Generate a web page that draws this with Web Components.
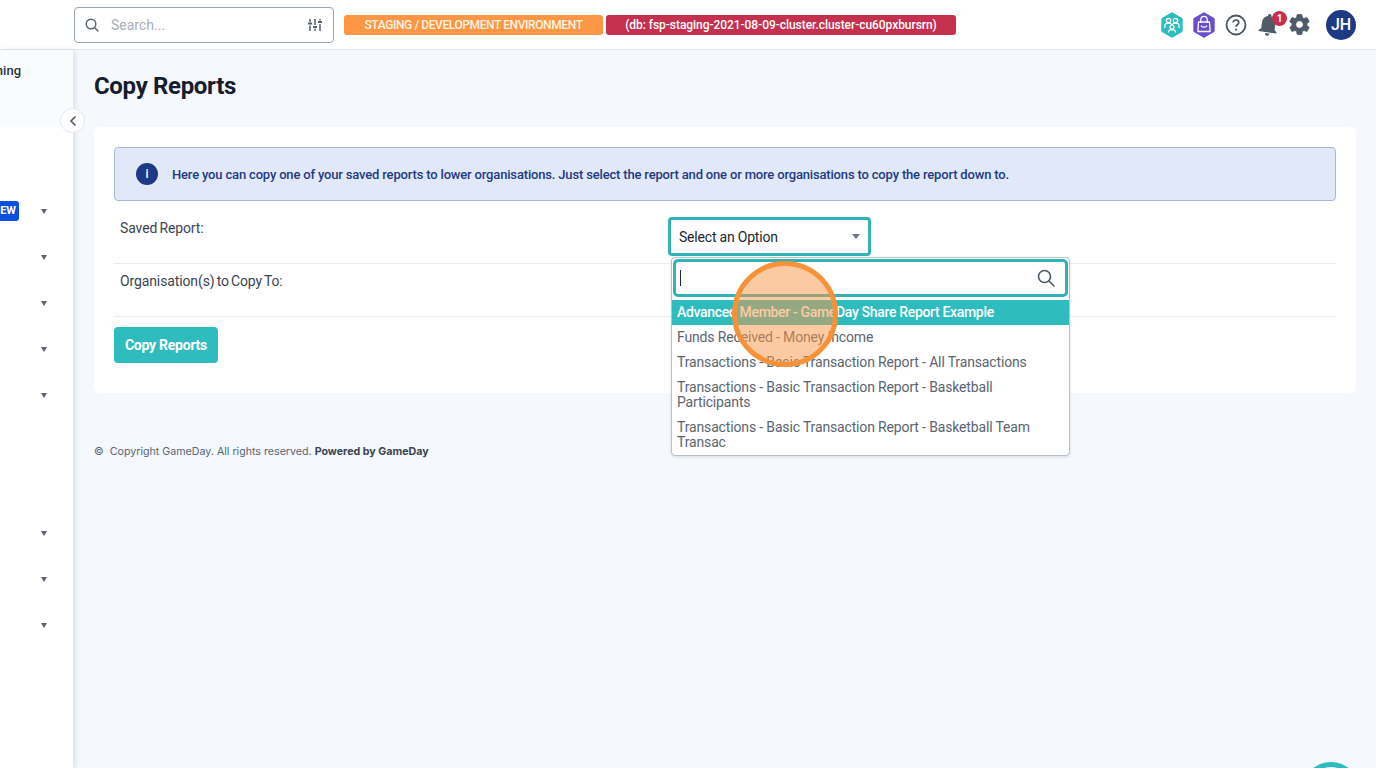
<!DOCTYPE html>
<html lang="en">
<head>
<meta charset="utf-8">
<title>Copy Reports</title>
<style>
html, body { margin: 0; height: 100%; overflow: hidden; }
body {
    display: flex;
    flex-direction: column;
    font-family: Roboto, "Liberation Sans", sans-serif;
    background: #f5f8fc;
}
</style>
</head>
<body>
<app-header></app-header>
<app-shell>
    <side-bar slot="side"></side-bar>
    <h-title>Copy Reports</h-title>
    <copy-card></copy-card>
    <page-footer></page-footer>
</app-shell>
<script>
class AppHeader extends HTMLElement {
    connectedCallback() {
        const shadow = this.attachShadow({ mode: "open" });
        shadow.innerHTML = `
          <style>
          :host {
              display: flex;
              align-items: center;
              height: 49px;
              flex: none;
              background: #fff;
              border-bottom: 1px solid #e4eaee;
              padding-left: 74px;
              box-sizing: content-box;
          }
          .search {
              width: 260px;
              height: 36px;
              box-sizing: border-box;
              border: 1px solid #9aa7b1;
              border-radius: 4px;
              display: flex;
              align-items: center;
              padding: 0 10px;
              color: #a7b0b8;
              font-size: 14px;
          }
          .search span { flex: 1; margin-left: 12px; }
          .badges { display: flex; gap: 3px; margin-left: 10px; }
          .badge {
              height: 20px;
              line-height: 20px;
              border-radius: 3px;
              color: #fff;
              font-size: 12px;
              font-weight: 500;
              text-align: center;
          }
          .orange { width: 259px; background: #fb9644; color: #fff3e2; letter-spacing: -0.4px; }
          .red { width: 350px; background: #c5304f; letter-spacing: -0.05px; }
          .icons { display: flex; align-items: center; margin-left: auto; padding-right: 20px; }
          svg { display: block; }
          .bell { position: relative; margin-left: 8px; }
          .bell svg { transform: rotate(8deg); }
          .bell b {
              position: absolute;
              left: 17px;
              top: 0;
              width: 15px;
              height: 15px;
              border-radius: 50%;
              background: #c5304f;
              color: #fff;
              font-size: 10px;
              line-height: 15px;
              text-align: center;
              font-weight: 700;
          }
          .avatar {
              width: 30px;
              height: 30px;
              border-radius: 50%;
              background: #1e3a86;
              color: #fff;
              font-size: 16px;
              font-weight: 500;
              line-height: 30px;
              text-align: center;
              margin-left: 14px;
          }
          </style>
          <div class="search">
            <svg width="14" height="14" viewBox="0 0 14 14" fill="none" stroke="#55626e" stroke-width="1.4">
              <circle cx="6" cy="6" r="4.8"/><path d="M9.6 9.6 13 13" stroke-linecap="round"/>
            </svg>
            <span>Search...</span>
            <svg width="16" height="16" viewBox="0 0 16 16" fill="none" stroke="#55626e" stroke-width="1.5">
              <path d="M3 2v3M3 8.5V14M8 2v6M8 11.5V14M13 2v1.5M13 7v7"/>
              <path d="M1 6.5h4M6 10h4M11 5h4" stroke-width="1.8"/>
            </svg>
          </div>
          <div class="badges">
            <div class="badge orange">STAGING / DEVELOPMENT ENVIRONMENT</div>
            <div class="badge red">(db: fsp-staging-2021-08-09-cluster.cluster-cu60pxbursrn)</div>
          </div>
          <div class="icons">
            <svg width="22" height="26" viewBox="0 0 22 26">
              <path d="M11 1.500 20.500 7v12L11 24.500 1.500 19V7z" fill="#2ebcbf" stroke="#2ebcbf" stroke-width="2.400" stroke-linejoin="round"/>
              <g fill="none" stroke="#fff" stroke-width="1.200">
                <circle cx="7.500" cy="8.500" r="2.200"/><circle cx="14.500" cy="8.500" r="2.200"/>
                <path d="M3.800 16v-2c0-1.700 1.500-2.800 3.700-2.800 1.400 0 2.800.6 3.500 1.500.7-.9 2.100-1.500 3.500-1.500 2.200 0 3.700 1.100 3.700 2.800v2"/>
                <circle cx="11" cy="15" r="2"/>
                <path d="M7.500 20.500c0-1.700 1.500-2.800 3.500-2.800s3.500 1.100 3.500 2.800"/>
              </g>
            </svg>
            <svg style="margin-left:10px" width="22" height="26" viewBox="0 0 22 26">
              <path d="M11 1.500 20.500 7v12L11 24.500 1.500 19V7z" fill="#6a4fc9" stroke="#6a4fc9" stroke-width="2.400" stroke-linejoin="round"/>
              <g fill="none" stroke="#fff" stroke-width="1.300" stroke-linecap="round" stroke-linejoin="round">
                <path d="M5.500 10h11l.6 9.500H4.900z"/>
                <path d="M7.800 10V7.500C7.800 5.600 9.200 4.300 11 4.300s3.200 1.300 3.200 3.200V10M8.300 14c.9 1.600 4.500 1.600 5.400 0"/>
              </g>
            </svg>
            <svg style="margin-left:10px" width="22" height="22" viewBox="0 0 22 22">
              <circle cx="11" cy="11" r="9.500" fill="none" stroke="#4a5663" stroke-width="1.800"/>
              <path d="M8.200 8.600c0-1.600 1.300-2.600 2.800-2.600s2.800 1 2.800 2.500c0 2.200-2.800 2.200-2.800 4.300" fill="none" stroke="#4a5663" stroke-width="1.700"/>
              <circle cx="11" cy="15.600" r="1.100" fill="#4a5663"/>
            </svg>
            <div class="bell">
              <svg width="27" height="27" viewBox="0 0 24 24" fill="#4f5b69">
                <path d="M12 22c1.100 0 2-.9 2-2h-4c0 1.100.9 2 2 2zm6-6v-5c0-3.070-1.630-5.640-4.500-6.320V4c0-.83-.67-1.500-1.500-1.500s-1.500.67-1.500 1.500v.68C7.640 5.360 6 7.920 6 11v5l-2 2v1h16v-1l-2-2z"/>
              </svg>
              <b>1</b>
            </div>
            <svg style="margin-left:5px" width="25" height="25" viewBox="0 0 24 24" fill="#4f5b69" stroke="#4f5b69" stroke-width="0.700" stroke-linejoin="round">
              <path d="M19.140 12.940c.04-.3.06-.61.06-.94 0-.32-.02-.64-.07-.94l2.030-1.580c.18-.14.23-.41.12-.61l-1.920-3.320c-.12-.22-.37-.29-.59-.22l-2.390.96c-.5-.38-1.030-.7-1.620-.94l-.36-2.540c-.04-.24-.24-.41-.48-.41h-3.840c-.24 0-.43.17-.47.41l-.36 2.540c-.59.24-1.130.57-1.620.94l-2.390-.96c-.22-.08-.47 0-.59.22L2.740 8.870c-.12.21-.08.47.12.61l2.030 1.580c-.05.3-.09.63-.09.94s.02.64.07.94l-2.030 1.580c-.18.14-.23.41-.12.61l1.920 3.320c.12.22.37.29.59.22l2.390-.96c.5.38 1.030.7 1.620.94l.36 2.540c.05.24.24.41.48.41h3.840c.24 0 .44-.17.47-.41l.36-2.540c.59-.24 1.130-.56 1.620-.94l2.390.96c.22.08.47 0 .59-.22l1.920-3.320c.12-.22.07-.47-.12-.61l-2.010-1.580zM12 15.600c-1.980 0-3.600-1.620-3.600-3.600s1.620-3.600 3.600-3.600 3.600 1.620 3.600 3.600-1.620 3.600-3.600 3.600z"/>
            </svg>
            <div class="avatar">JH</div>
          </div>
        `;
    }
}

class AppShell extends HTMLElement {
    connectedCallback() {
        const shadow = this.attachShadow({ mode: "open" });
        shadow.innerHTML = `
          <style>
          :host { display: flex; flex: 1; min-height: 0; position: relative; }
          main { flex: 1; min-width: 0; padding: 0 20px 0 21px; }
          .help {
              position: fixed;
              left: 1303px;
              top: 762px;
              width: 56px;
              height: 56px;
              box-sizing: border-box;
              border-radius: 50%;
              border: 5px solid #2ebcbf;
              background: #fff;
          }
          </style>
          <slot name="side"></slot>
          <main><slot></slot></main>
          <div class="help"></div>
        `;
    }
}

class SideBar extends HTMLElement {
    connectedCallback() {
        const shadow = this.attachShadow({ mode: "open" });
        const rows = [
            [], ["NEW"], [""], [""], [""], [""], null, null, [""], [""], [""],
        ].map((row) => {
            if (!row) return `<div class="row"></div>`;
            const badge = row[0] ? `<span class="new">${row[0]}</span>` : "";
            const caret = row.length ? `<i></i>` : "";
            return `<div class="row"><div class="clip">${badge}</div>${caret}</div>`;
        }).join("");
        shadow.innerHTML = `
          <style>
          :host {
              display: block;
              width: 73px;
              flex: none;
              box-sizing: border-box;
              background: #fff;
              box-shadow: 2px 0 5px rgba(60, 80, 110, 0.14);
              position: relative;
              z-index: 1;
          }
          .top {
              height: 77px;
              background: #fafbfd;
              overflow: hidden;
              display: flex;
              justify-content: flex-end;
              width: 21px;
              padding-top: 13px;
              box-sizing: border-box;
              white-space: nowrap;
              font-size: 13px;
              font-weight: 500;
              color: #2a3340;
          }
          .band { background: #fafbfd; }
          .rows { padding-top: 15px; }
          .row { height: 46px; display: flex; align-items: center; }
          .clip { width: 19px; display: flex; justify-content: flex-end; overflow: hidden; flex: none; }
          .new {
              flex: none;
              background: #0b4fe0;
              color: #fff;
              font-size: 11px;
              font-weight: 700;
              line-height: 20px;
              padding: 0 3px;
              border-radius: 3px;
          }
          i {
              margin-left: 22px;
              border-top: 5px solid #5a6470;
              border-left: 3.5px solid transparent;
              border-right: 3.5px solid transparent;
          }
          .toggle {
              position: absolute;
              left: 60px;
              top: 58px;
              width: 25px;
              height: 25px;
              box-sizing: border-box;
              border-radius: 50%;
              background: #fff;
              border: 1px solid #e3e8ee;
              display: flex;
              align-items: center;
              justify-content: center;
          }
          </style>
          <div class="band"><div class="top">Training</div></div>
          <div class="rows">${rows}</div>
          <div class="toggle">
            <svg width="8" height="12" viewBox="0 0 8 12" fill="none" stroke="#4f5b69" stroke-width="1.600">
              <path d="M6.500 1.500 2 6l4.500 4.500"/>
            </svg>
          </div>
        `;
    }
}

class HTitle extends HTMLElement {
    connectedCallback() {
        const shadow = this.attachShadow({ mode: "open" });
        shadow.innerHTML = `
          <style>
          :host {
              display: block;
              height: 77px;
              box-sizing: border-box;
              padding-top: 20px;
              font-size: 24px;
              line-height: 32px;
              font-weight: 700;
              letter-spacing: -0.33px;
              color: #141c2e;
          }
          </style>
          <slot></slot>
        `;
    }
}

class InfoNotice extends HTMLElement {
    connectedCallback() {
        const shadow = this.attachShadow({ mode: "open" });
        shadow.innerHTML = `
          <style>
          :host {
              display: flex;
              align-items: center;
              height: 54px;
              box-sizing: border-box;
              padding-left: 21px;
              background: #e1e8f8;
              border: 1px solid #a9b7da;
              border-radius: 4px;
              color: #1e3a86;
              font-size: 13px;
              font-weight: 500;
              letter-spacing: -0.17px;
          }
          .dot {
              width: 22px;
              height: 22px;
              border-radius: 50%;
              background: #1e3a86;
              color: #fff;
              font-size: 12px;
              line-height: 22px;
              text-align: center;
              margin-right: 14px;
              flex: none;
          }
          </style>
          <span class="dot">i</span>
          <span><slot></slot></span>
        `;
    }
}

class FormRow extends HTMLElement {
    connectedCallback() {
        const shadow = this.attachShadow({ mode: "open" });
        shadow.innerHTML = `
          <style>
          :host {
              display: grid;
              grid-template-columns: 555px 1fr;
              min-height: 53px;
              box-sizing: border-box;
              border-bottom: 1px solid #e9edf1;
              font-size: 14px;
              color: #3b4550;
          }
          .label {
              padding: 8px 0 0 6px;
              line-height: 18px;
              letter-spacing: -0.12px;
              word-spacing: -1.2px;
          }
          .field { padding-top: 6px; position: relative; }
          </style>
          <div class="label"><slot name="label"></slot></div>
          <div class="field"><slot></slot></div>
        `;
    }
}

class SelectBox extends HTMLElement {
    connectedCallback() {
        const shadow = this.attachShadow({ mode: "open" });
        const options = [
            "Advanced Member - GameDay Share Report Example",
            "Funds Received - Money Income",
            "Transactions - Basic Transaction Report - All Transactions",
            "Transactions - Basic Transaction Report - Basketball Participants",
            "Transactions - Basic Transaction Report - Basketball Team Transac",
        ];
        shadow.innerHTML = `
          <style>
          :host { display: block; position: relative; width: 203px; margin-left: -1px; }
          .box {
              height: 39px;
              box-sizing: border-box;
              border: 3px solid #2fb3b6;
              border-radius: 4px;
              display: flex;
              align-items: center;
              justify-content: space-between;
              padding: 0 8px;
              font-size: 14px;
              letter-spacing: -0.2px;
              color: #20272e;
              background: #fff;
          }
          .box i {
              border-top: 5px solid #6b7580;
              border-left: 4px solid transparent;
              border-right: 4px solid transparent;
          }
          .menu {
              position: absolute;
              left: 3px;
              top: 40px;
              width: 399px;
              box-sizing: border-box;
              background: #fff;
              border: 1px solid #b9c1c9;
              border-radius: 4px;
              box-shadow: 0 1px 3px rgba(40, 60, 90, 0.15);
              overflow: hidden;
              z-index: 2;
          }
          .input {
              height: 38px;
              box-sizing: border-box;
              margin: 1px 1px 3px;
              border: 3px solid #2fb3b6;
              border-radius: 5px;
              display: flex;
              align-items: center;
              justify-content: space-between;
              padding: 0 10px 0 4px;
          }
          .caret { width: 1px; height: 16px; background: #20272e; }
          .option {
              padding: 5px;
              font-size: 14px;
              line-height: 15px;
              letter-spacing: -0.15px;
              color: #5a6570;
          }
          .option.on { background: #2ebcbf; color: #fff; font-weight: 500; letter-spacing: -0.33px; }
          .spot {
              position: absolute;
              left: 64px;
              top: 44px;
              width: 106px;
              height: 106px;
              box-sizing: border-box;
              border-radius: 50%;
              border: 5px solid #f79239;
              background: rgba(250, 150, 70, 0.5);
              z-index: 3;
          }
          </style>
          <div class="box">Select an Option<i></i></div>
          <div class="menu">
            <div class="input">
              <span class="caret"></span>
              <svg width="18" height="18" viewBox="0 0 18 18" fill="none" stroke="#4a5663" stroke-width="1.600">
                <circle cx="7.500" cy="7.500" r="6"/><path d="M12 12l5 5" stroke-linecap="round"/>
              </svg>
            </div>
            ${options.map((o, i) => `<div class="option${i === 0 ? " on" : ""}">${o}</div>`).join("")}
          </div>
          <div class="spot"></div>
        `;
    }
}

class CopyCard extends HTMLElement {
    connectedCallback() {
        const shadow = this.attachShadow({ mode: "open" });
        shadow.innerHTML = `
          <style>
          :host {
              display: block;
              background: #fff;
              border-radius: 6px;
              padding: 20px 20px 30px;
          }
          .rows { margin-top: 10px; }
          button {
              display: block;
              margin-top: 10px;
              width: 104px;
              height: 36px;
              border: 0;
              border-radius: 4px;
              background: #2ebcbf;
              color: #fff;
              font: 700 14px Roboto, sans-serif;
              letter-spacing: -0.25px;
          }
          </style>
          <info-notice>Here you can copy one of your saved reports to lower organisations. Just select the report and one or more organisations to copy the report down to.</info-notice>
          <div class="rows">
            <form-row><span slot="label">Saved Report:</span><select-box></select-box></form-row>
            <form-row><span slot="label">Organisation(s) to Copy To:</span></form-row>
          </div>
          <button type="button">Copy Reports</button>
        `;
    }
}

class PageFooter extends HTMLElement {
    connectedCallback() {
        const shadow = this.attachShadow({ mode: "open" });
        shadow.innerHTML = `
          <style>
          :host {
              display: block;
              margin-top: 51px;
              font-family: Inter, sans-serif;
              font-size: 10.660px;
              line-height: 16px;
              color: #5a6570;
          }
          b { color: #3b4550; font-weight: 700; }
          </style>
          © &nbsp;Copyright GameDay. All rights reserved. <b>Powered by GameDay</b>
        `;
    }
}

customElements.define("app-header", AppHeader);
customElements.define("app-shell", AppShell);
customElements.define("side-bar", SideBar);
customElements.define("h-title", HTitle);
customElements.define("info-notice", InfoNotice);
customElements.define("form-row", FormRow);
customElements.define("select-box", SelectBox);
customElements.define("copy-card", CopyCard);
customElements.define("page-footer", PageFooter);
</script>
</body>
</html>
